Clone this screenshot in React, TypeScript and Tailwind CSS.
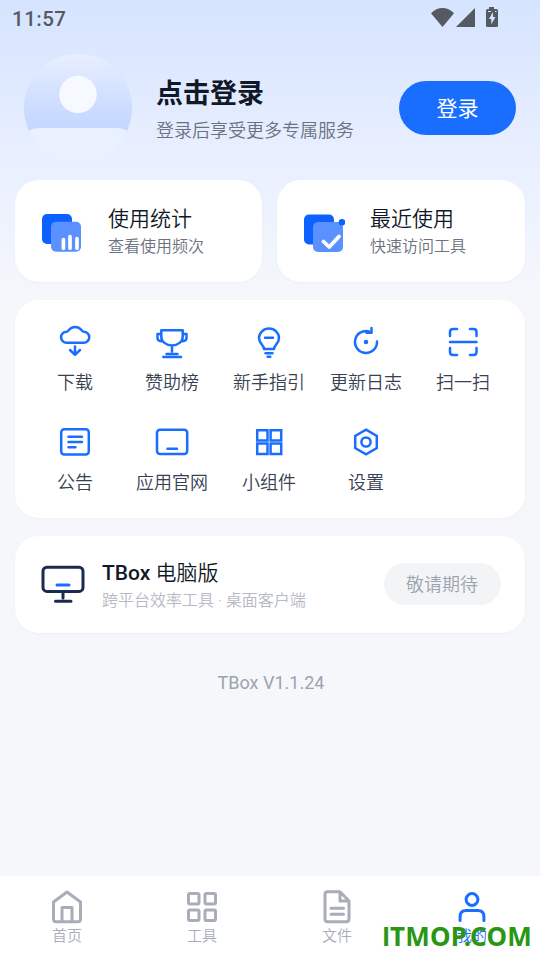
import React from "react";

const font = "font-['Roboto','Noto_Sans_CJK_SC',sans-serif]";

const line = {
  fill: "none",
  stroke: "currentColor",
  strokeLinecap: "round" as const,
  strokeLinejoin: "round" as const,
};

function StatusBar() {
  return (
    <div className="h-[38px] shrink-0 flex items-center justify-between pl-3 pr-[41px] text-[#545962]">
      <span className="text-[20.5px] leading-[38px] tracking-[0.5px] font-medium">11:57</span>
      <div className="flex h-[38px] items-start pt-[7px]">
        <svg width="69" height="21" viewBox="0 0 69 21" fill="currentColor">
          <path d="M1 6.2C7.5-.7 17.5-.7 24 6.2L12.5 20z" />
          <path d="M45 1v19H26z" />
          <path
            fillRule="evenodd"
            d="M59 0h5v2h2.500Q68 2 68 3.500V18.500Q68 20 66.500 20H57.500Q56 20 56 18.500V3.500Q56 2 57.500 2H59zM63 5L59 12H61.300V17.200L65.500 10H63zM58 4h3v1h-3zM65 4h1.500v1H65z"
          />
        </svg>
      </div>
    </div>
  );
}

function Avatar() {
  return (
    <svg width="108" height="108" viewBox="0 0 108 108" className="shrink-0">
      <defs>
        <linearGradient id="avatarBg" x1="0" y1="0" x2="0" y2="1">
          <stop offset="0" stopColor="#e8efff" />
          <stop offset="0.72" stopColor="#cadbff" />
          <stop offset="1" stopColor="#c4d7ff" />
        </linearGradient>
        <linearGradient id="avatarBody" x1="0" y1="0" x2="0" y2="1">
          <stop offset="0" stopColor="#e9f0ff" />
          <stop offset="1" stopColor="#ebf1ff" />
        </linearGradient>
        <clipPath id="avatarClip">
          <circle cx="54" cy="54" r="54" />
        </clipPath>
      </defs>
      <g clipPath="url(#avatarClip)">
        <rect width="108" height="80" fill="url(#avatarBg)" />
        <circle cx="54" cy="40.500" r="18.700" fill="#f6f9ff" />
        <path d="M0 124V90Q0 74 16 74H92Q108 74 108 90V124z" fill="url(#avatarBody)" />
      </g>
    </svg>
  );
}

function StatsIcon() {
  return (
    <svg width="42" height="42" viewBox="0 0 42 42">
      <rect x="1" y="4" width="30" height="30" rx="5" fill="#0d62ff" />
      <rect x="10" y="11.700" width="30" height="30" rx="5" fill="#5b90ff" />
      <path d="M22.400 29.500v8.700M29 26.500v11.700M36 28.500v9.700" stroke="#fff" strokeWidth="3.700" strokeLinecap="round" />
    </svg>
  );
}

function RecentIcon() {
  return (
    <svg width="42" height="42" viewBox="0 0 42 42">
      <rect x="1" y="4.500" width="30" height="30" rx="5" fill="#0d62ff" />
      <rect x="10" y="12" width="30" height="30" rx="5" fill="#5b90ff" />
      <circle cx="39" cy="12.300" r="3.300" fill="#0d62ff" />
      <path d="M20.500 31.500l5.700 5.500L36 26.500" fill="none" stroke="#fff" strokeWidth="3.800" strokeLinecap="round" strokeLinejoin="round" />
    </svg>
  );
}

const icons: Record<string, React.ReactNode> = {
  download: (
    <>
      <path d="M9.500 18.700A5.450 5.450 0 0 1 9.500 7.800Q10.800 7.600 11.600 6.400A8 8 0 0 1 24.700 6.400Q25.500 7.600 26.800 7.800A5.450 5.450 0 0 1 26.800 18.700z" />
      <path d="M18 22.500v8.200M13 26l5 4.800 5-4.800" />
    </>
  ),
  trophy: (
    <path d="M7.300 6.200h21.400v6.500a10.700 8.700 0 0 1-21.400 0zM7 10H3.500v4q0 3 4 3.200M29 10h3.500v4q0 3-4 3.200M18 21.500v6M12.500 30h11M9.300 33h17.700" />
  ),
  bulb: (
    <path d="M13 24.900c0-3.900-5-5.400-5-10.900a10 9.500 0 0 1 20 0c0 5.500-5 7-5 10.900zM14 13.700h8M14.500 29.300h7M16.700 32.700h2.600" />
  ),
  update: (
    <>
      <path d="M29 17.600a11 11 0 1 1-8-10.200M23.500 4v4.800h-5" />
      <circle cx="18" cy="18" r="2.300" fill="currentColor" stroke="none" />
    </>
  ),
  scan: (
    <path d="M5 12V8q0-3 3-3h4M25 5h3.500q3 0 3 3v4M5 24v4q0 3 3 3h4M25 31h3.500q3 0 3-3v-4M5 18h26.500" />
  ),
  notice: (
    <>
      <rect x="4.200" y="5.200" width="27.600" height="25.400" rx="3" />
      <path d="M11.500 12.700H25M11.500 18H25M11.500 23.300h7" />
    </>
  ),
  web: (
    <>
      <rect x="3" y="5.800" width="30.200" height="24.200" rx="3" />
      <path d="M13.500 24.700h9.500" />
    </>
  ),
  widget: (
    <path strokeLinejoin="miter" d="M6.200 6.200h10.300v10.300H6.200zM19.600 6.200h10.600v10.300H19.600zM6.200 19.600h10.300v10.300H6.200zM19.600 19.600h10.600v10.300H19.600z" />
  ),
  settings: (
    <>
      <path strokeLinejoin="miter" d="M18 5.700l10.800 6.200v12.200L18 30.300 7.200 24.100V11.900z" />
      <circle cx="18" cy="18" r="4.600" />
    </>
  ),
};

const tools = [
  { icon: "download", label: "下载" },
  { icon: "trophy", label: "赞助榜" },
  { icon: "bulb", label: "新手指引" },
  { icon: "update", label: "更新日志" },
  { icon: "scan", label: "扫一扫" },
  { icon: "notice", label: "公告" },
  { icon: "web", label: "应用官网" },
  { icon: "widget", label: "小组件" },
  { icon: "settings", label: "设置" },
];

const tabs = [
  {
    label: "首页",
    icon: <path d="M4.500 13L18 3 31.500 13v17q0 2.700-2.700 2.700H7.200q-2.700 0-2.700-2.700zM13 32.500V18.500h10V32.500" />,
  },
  {
    label: "工具",
    icon: (
      <>
        <rect x="4.500" y="4.500" width="10.500" height="10.500" rx="1.500" />
        <rect x="21" y="4.500" width="10.500" height="10.500" rx="1.500" />
        <rect x="4.500" y="21" width="10.500" height="10.500" rx="1.500" />
        <rect x="21" y="21" width="10.500" height="10.500" rx="1.500" />
      </>
    ),
  },
  {
    label: "文件",
    icon: <path d="M8.500 2.700H21L30 12V30q0 2.700-2.700 2.700H8.700Q6 32.700 6 30V5.200q0-2.500 2.500-2.500zM21 2.700V12H30M12 19.300h12.500M12 25.300h12.500" />,
  },
  {
    label: "我的",
    active: true,
    icon: (
      <>
        <circle cx="18" cy="10.500" r="5.900" />
        <path d="M6.100 31.500V28q0-6.500 6-6.500h11.800q6 0 6 6.500v3.500" />
      </>
    ),
  },
];

function EntryCard({ icon, title, desc }: { icon: React.ReactNode; title: string; desc: string }) {
  return (
    <div className="h-[102px] flex items-center rounded-[24px] bg-white pl-[26px] shadow-[0_1px_3px_rgba(15,23,42,0.03)]">
      {icon}
      <div className="ml-[25px] pt-px">
        <div className="text-[21px] leading-[30px] font-[350] text-[#111827]">{title}</div>
        <div className="text-[16px] leading-[26px] font-[350] text-[#6b7280]">{desc}</div>
      </div>
    </div>
  );
}

export default function App() {
  return (
    <div
      className={`relative h-[960px] w-[540px] overflow-hidden flex flex-col bg-[#f5f7fb] bg-[linear-gradient(180deg,#d6e4ff_0px,#eaf0ff_170px,#f5f7fb_300px)] ${font}`}
    >
      <StatusBar />

      <header className="mt-4 h-[108px] flex items-center px-6">
        <Avatar />
        <div className="ml-6 flex-1 pt-[4px]">
          <h1 className="text-[27px] leading-[40px] font-bold text-[#111827]">点击登录</h1>
          <p className="pt-px text-[18px] leading-[32px] font-[350] text-[#6b7280]">登录后享受更多专属服务</p>
        </div>
        <button className="h-[54px] w-[117px] rounded-full bg-[#1a6eff] pt-[3px] text-[21px] text-white">登录</button>
      </header>

      <main className="flex-1 px-[15px] pt-[18px]">
        <section className="grid grid-cols-[247px_248px] gap-[15px]">
          <EntryCard icon={<StatsIcon />} title="使用统计" desc="查看使用频次" />
          <EntryCard icon={<RecentIcon />} title="最近使用" desc="快速访问工具" />
        </section>

        <section className="mt-[18px] h-[218px] grid grid-cols-5 auto-rows-[100px] rounded-[24px] bg-white pl-[11.5px] pr-[13.5px] pt-6 shadow-[0_1px_3px_rgba(15,23,42,0.03)]">
          {tools.map((tool) => (
            <div key={tool.icon} className="flex flex-col items-center">
              <svg width="36" height="36" viewBox="0 0 36 36" strokeWidth="2.500" className="text-[#1a6eff]" {...line}>
                {icons[tool.icon]}
              </svg>
              <span className="mt-[9px] text-[18px] leading-[28px] font-[350] whitespace-nowrap text-[#374151]">{tool.label}</span>
            </div>
          ))}
        </section>

        <section className="mt-[18px] h-[97px] flex items-center rounded-[24px] bg-white pl-[26px] pr-6 shadow-[0_1px_3px_rgba(15,23,42,0.03)]">
          <svg width="44" height="44" viewBox="0 0 44 44" strokeWidth="3" className="text-[#1c2a50]" {...line}>
            <rect x="2" y="4.200" width="40" height="24.200" rx="4" />
            <path d="M22 29v6M14.500 38.300h15.500" />
            <path d="M16 22h12" stroke="#1a6eff" />
          </svg>
          <div className="ml-[17px] flex-1 pt-[3px]">
            <div className="text-[21px] leading-[30px] font-[350] text-[#111827]">
              <span className="font-medium">TBox</span> 电脑版
            </div>
            <div className="text-[16px] leading-[26px] font-[350] whitespace-nowrap text-[#b6bac3]">跨平台效率工具 · 桌面客户端</div>
          </div>
          <span className="mb-px h-[42px] w-[117px] flex items-center justify-center rounded-full bg-[#f3f4f6] pr-px text-[18px] font-[350] text-[#9ca3af]">
            敬请期待
          </span>
        </section>

        <p className="mt-[36px] pl-[2px] text-center text-[18px] leading-[28px] text-[#9ca3af]">TBox V1.1.24</p>
      </main>

      <nav className="h-[84px] grid grid-cols-4 bg-white pt-[13px]">
        {tabs.map((tab) => (
          <div key={tab.label} className={`flex flex-col items-center pr-px ${tab.active ? "text-[#1a6eff]" : "text-[#a9adb9]"}`}>
            <svg width="36" height="36" viewBox="0 0 36 36" strokeWidth="3" {...line}>
              {tab.icon}
            </svg>
            <span className="mt-px text-[15px] leading-[20px] font-[350]">{tab.label}</span>
          </div>
        ))}
      </nav>

      <div className="absolute right-[8px] bottom-[5px] text-[26px] leading-[36px] tracking-[0.25px] font-bold text-[#2a9614] font-['Noto_Sans','Open_Sans',sans-serif]">
        <span className="font-['Inter',sans-serif] text-[25.5px]">I</span>TMOP.COM
      </div>
    </div>
  );
}
